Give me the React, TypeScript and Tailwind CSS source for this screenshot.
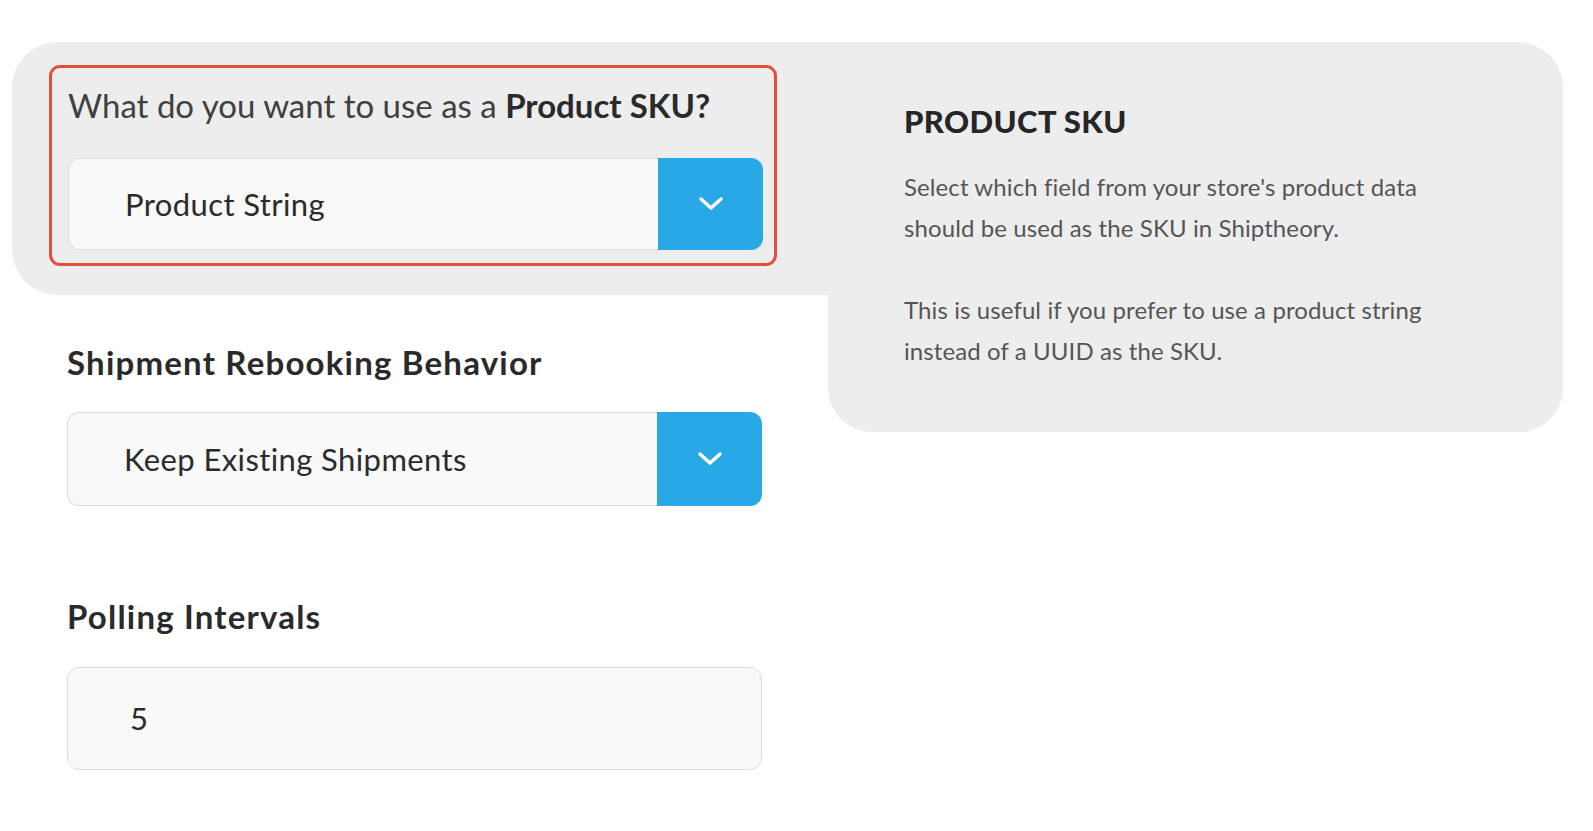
import React from "react";

function Chevron() {
  return (
    <svg width="26" height="16" viewBox="0 0 26 16" fill="none">
      <polyline points="3,3 13,12 23,3" stroke="white" strokeWidth="3.5" strokeLinecap="round" strokeLinejoin="round" />
    </svg>
  );
}

function Select({ value, height }: { value: string; height: string }) {
  return (
    <div className={`flex w-[695px] ${height}`}>
      <div className="flex flex-1 items-center rounded-l-[12px] border border-r-0 border-[#dcdcdc] bg-[#f9f9f9] pl-[56px] text-[31px] tracking-[0.4px] text-[#2b2b2b]">
        {value}
      </div>
      <div className="flex w-[105px] items-center justify-center rounded-r-[12px] bg-[#29a8e6]">
        <Chevron />
      </div>
    </div>
  );
}

export default function App() {
  return (
    <div className="min-h-screen bg-white pl-[12px] pt-[42px] font-['Lato',sans-serif]">
      <div className="flex">
        {/* left column */}
        <div className="w-[816px]">
          <div className="h-[253px] rounded-l-[46px] bg-[#ededed] pl-[37px] pt-[23px]">
            <div className="h-[201px] w-[728px] rounded-[11px] border-[3px] border-[#e34e3a] pl-[16px]">
              <div className="mt-[17px] h-[40px] whitespace-nowrap text-[33px] leading-[40px] text-[#404040]">
                What do you want to use as a <span className="font-bold text-[#2a2a2a]">Product SKU?</span>
              </div>
              <div className="mt-[33px]">
                <Select value="Product String" height="h-[92px]" />
              </div>
            </div>
          </div>

          <div className="pl-[55px]">
            <h2 className="mt-[47px] h-[40px] text-[33px] font-bold leading-[40px] tracking-[1.2px] text-[#2a2a2a]">
              Shipment Rebooking Behavior
            </h2>
            <div className="mt-[30px]">
              <Select value="Keep Existing Shipments" height="h-[94px]" />
            </div>

            <h2 className="mt-[90px] h-[40px] text-[33px] font-bold leading-[40px] tracking-[1.2px] text-[#2a2a2a]">
              Polling Intervals
            </h2>
            <div className="mt-[31px] flex h-[103px] w-[695px] items-center rounded-[12px] border border-[#dcdcdc] bg-[#f9f9f9] pl-[62px] text-[31px] text-[#2b2b2b]">
              5
            </div>
          </div>
        </div>

        {/* help panel */}
        <div className="h-[390px] w-[735px] rounded-tr-[46px] rounded-b-[44px] bg-[#ededed] pl-[76px] pt-[61px]">
          <h3 className="h-[36px] text-[31px] font-black uppercase leading-[36px] tracking-[0.4px] text-[#262626]">Product SKU</h3>
          <p className="mt-[27px] text-[24px] leading-[41px] tracking-[0.1px] text-[#555555]">
            Select which field from your store's product data
            <br />
            should be used as the SKU in Shiptheory.
            <br />
            <br />
            This is useful if you prefer to use a product string
            <br />
            instead of a UUID as the SKU.
          </p>
        </div>
      </div>
    </div>
  );
}
